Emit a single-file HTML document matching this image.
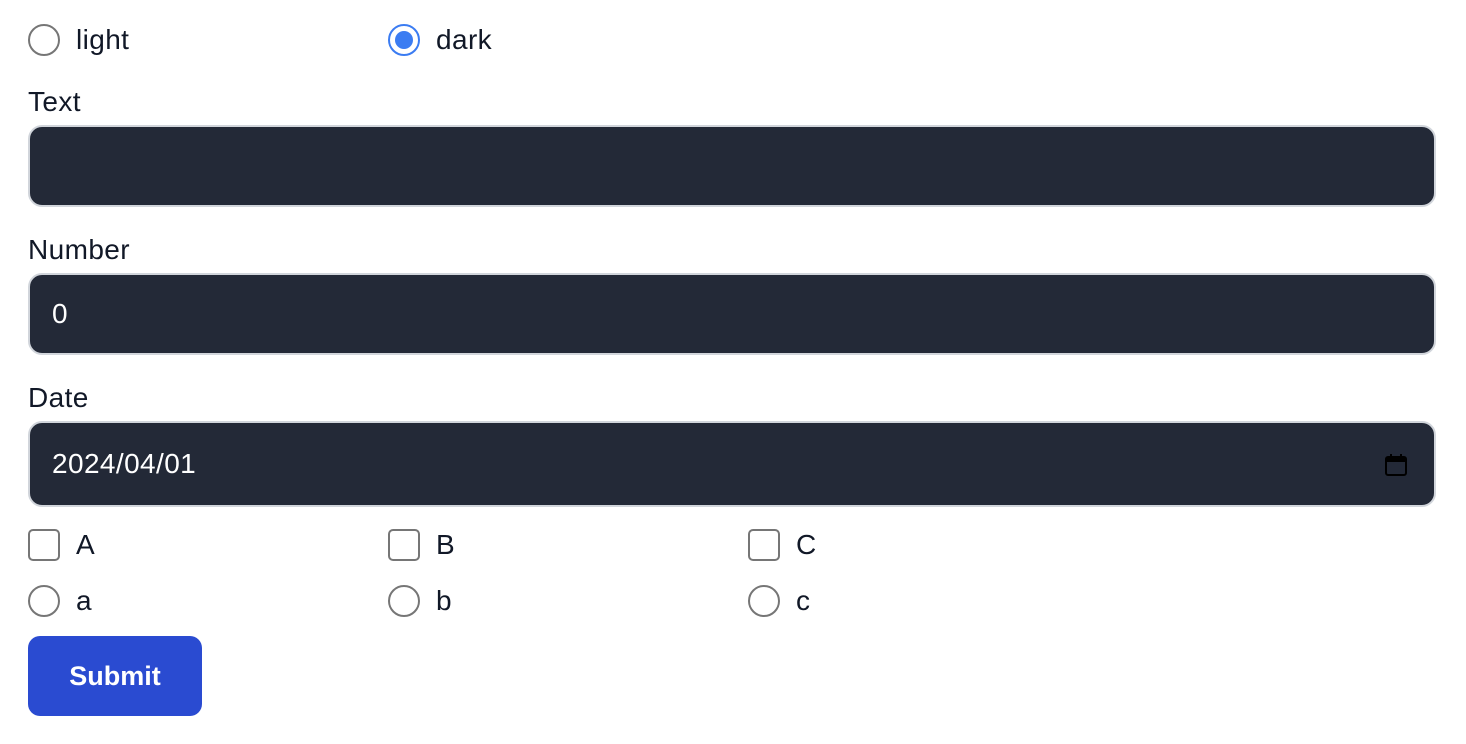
<!DOCTYPE html>
<html><head><style>
*{box-sizing:border-box;margin:0;padding:0}
body{width:1466px;height:744px;background:#fff;font-family:"Liberation Sans",sans-serif;color:#111827;font-size:28px;letter-spacing:0.4px;position:relative;overflow:hidden}
.a{position:absolute}
.r{width:32px;height:32px;border:2px solid #767676;border-radius:50%}
.c{width:32px;height:32px;border:2px solid #767676;border-radius:5px}
.l{line-height:32px}
.in{left:28px;width:1408px;background:#232937;border:2px solid #d1d5db;border-radius:14px;color:#fff;padding-left:22px;display:flex;align-items:center}
</style></head><body>
<div class="a r" style="left:28px;top:24px"></div><div class="a l" style="left:76px;top:24px">light</div>
<div class="a r" style="left:388px;top:24px;border-color:#3b7cf2"><div style="margin:5px;width:18px;height:18px;border-radius:50%;background:#3b7cf2"></div></div><div class="a l" style="left:436px;top:24px">dark</div>
<div class="a l" style="left:28px;top:86px">Text</div>
<div class="a in" style="top:125px;height:82px"></div>
<div class="a l" style="left:28px;top:234px">Number</div>
<div class="a in" style="top:273px;height:82px">0</div>
<div class="a l" style="left:28px;top:382px">Date</div>
<div class="a in" style="top:421px;height:86px">2024/04/01
<svg class="a" style="right:26px;top:30px" width="24" height="24" viewBox="0 0 24 24"><rect x="2" y="4" width="20" height="18" rx="2" fill="none" stroke="#000" stroke-width="2"/><rect x="2" y="4" width="20" height="5" fill="#000"/><rect x="6" y="1" width="2" height="4" fill="#000"/><rect x="16" y="1" width="2" height="4" fill="#000"/></svg></div>
<div class="a c" style="left:28px;top:529px"></div><div class="a l" style="left:76px;top:529px">A</div>
<div class="a c" style="left:388px;top:529px"></div><div class="a l" style="left:436px;top:529px">B</div>
<div class="a c" style="left:748px;top:529px"></div><div class="a l" style="left:796px;top:529px">C</div>
<div class="a r" style="left:28px;top:585px"></div><div class="a l" style="left:76px;top:585px">a</div>
<div class="a r" style="left:388px;top:585px"></div><div class="a l" style="left:436px;top:585px">b</div>
<div class="a r" style="left:748px;top:585px"></div><div class="a l" style="left:796px;top:585px">c</div>
<div class="a" style="left:28px;top:636px;width:174px;height:80px;background:#2a4bd1;border-radius:12px;color:#fff;font-weight:bold;font-size:27px;letter-spacing:0;display:flex;align-items:center;justify-content:center">Submit</div>
</body></html>
